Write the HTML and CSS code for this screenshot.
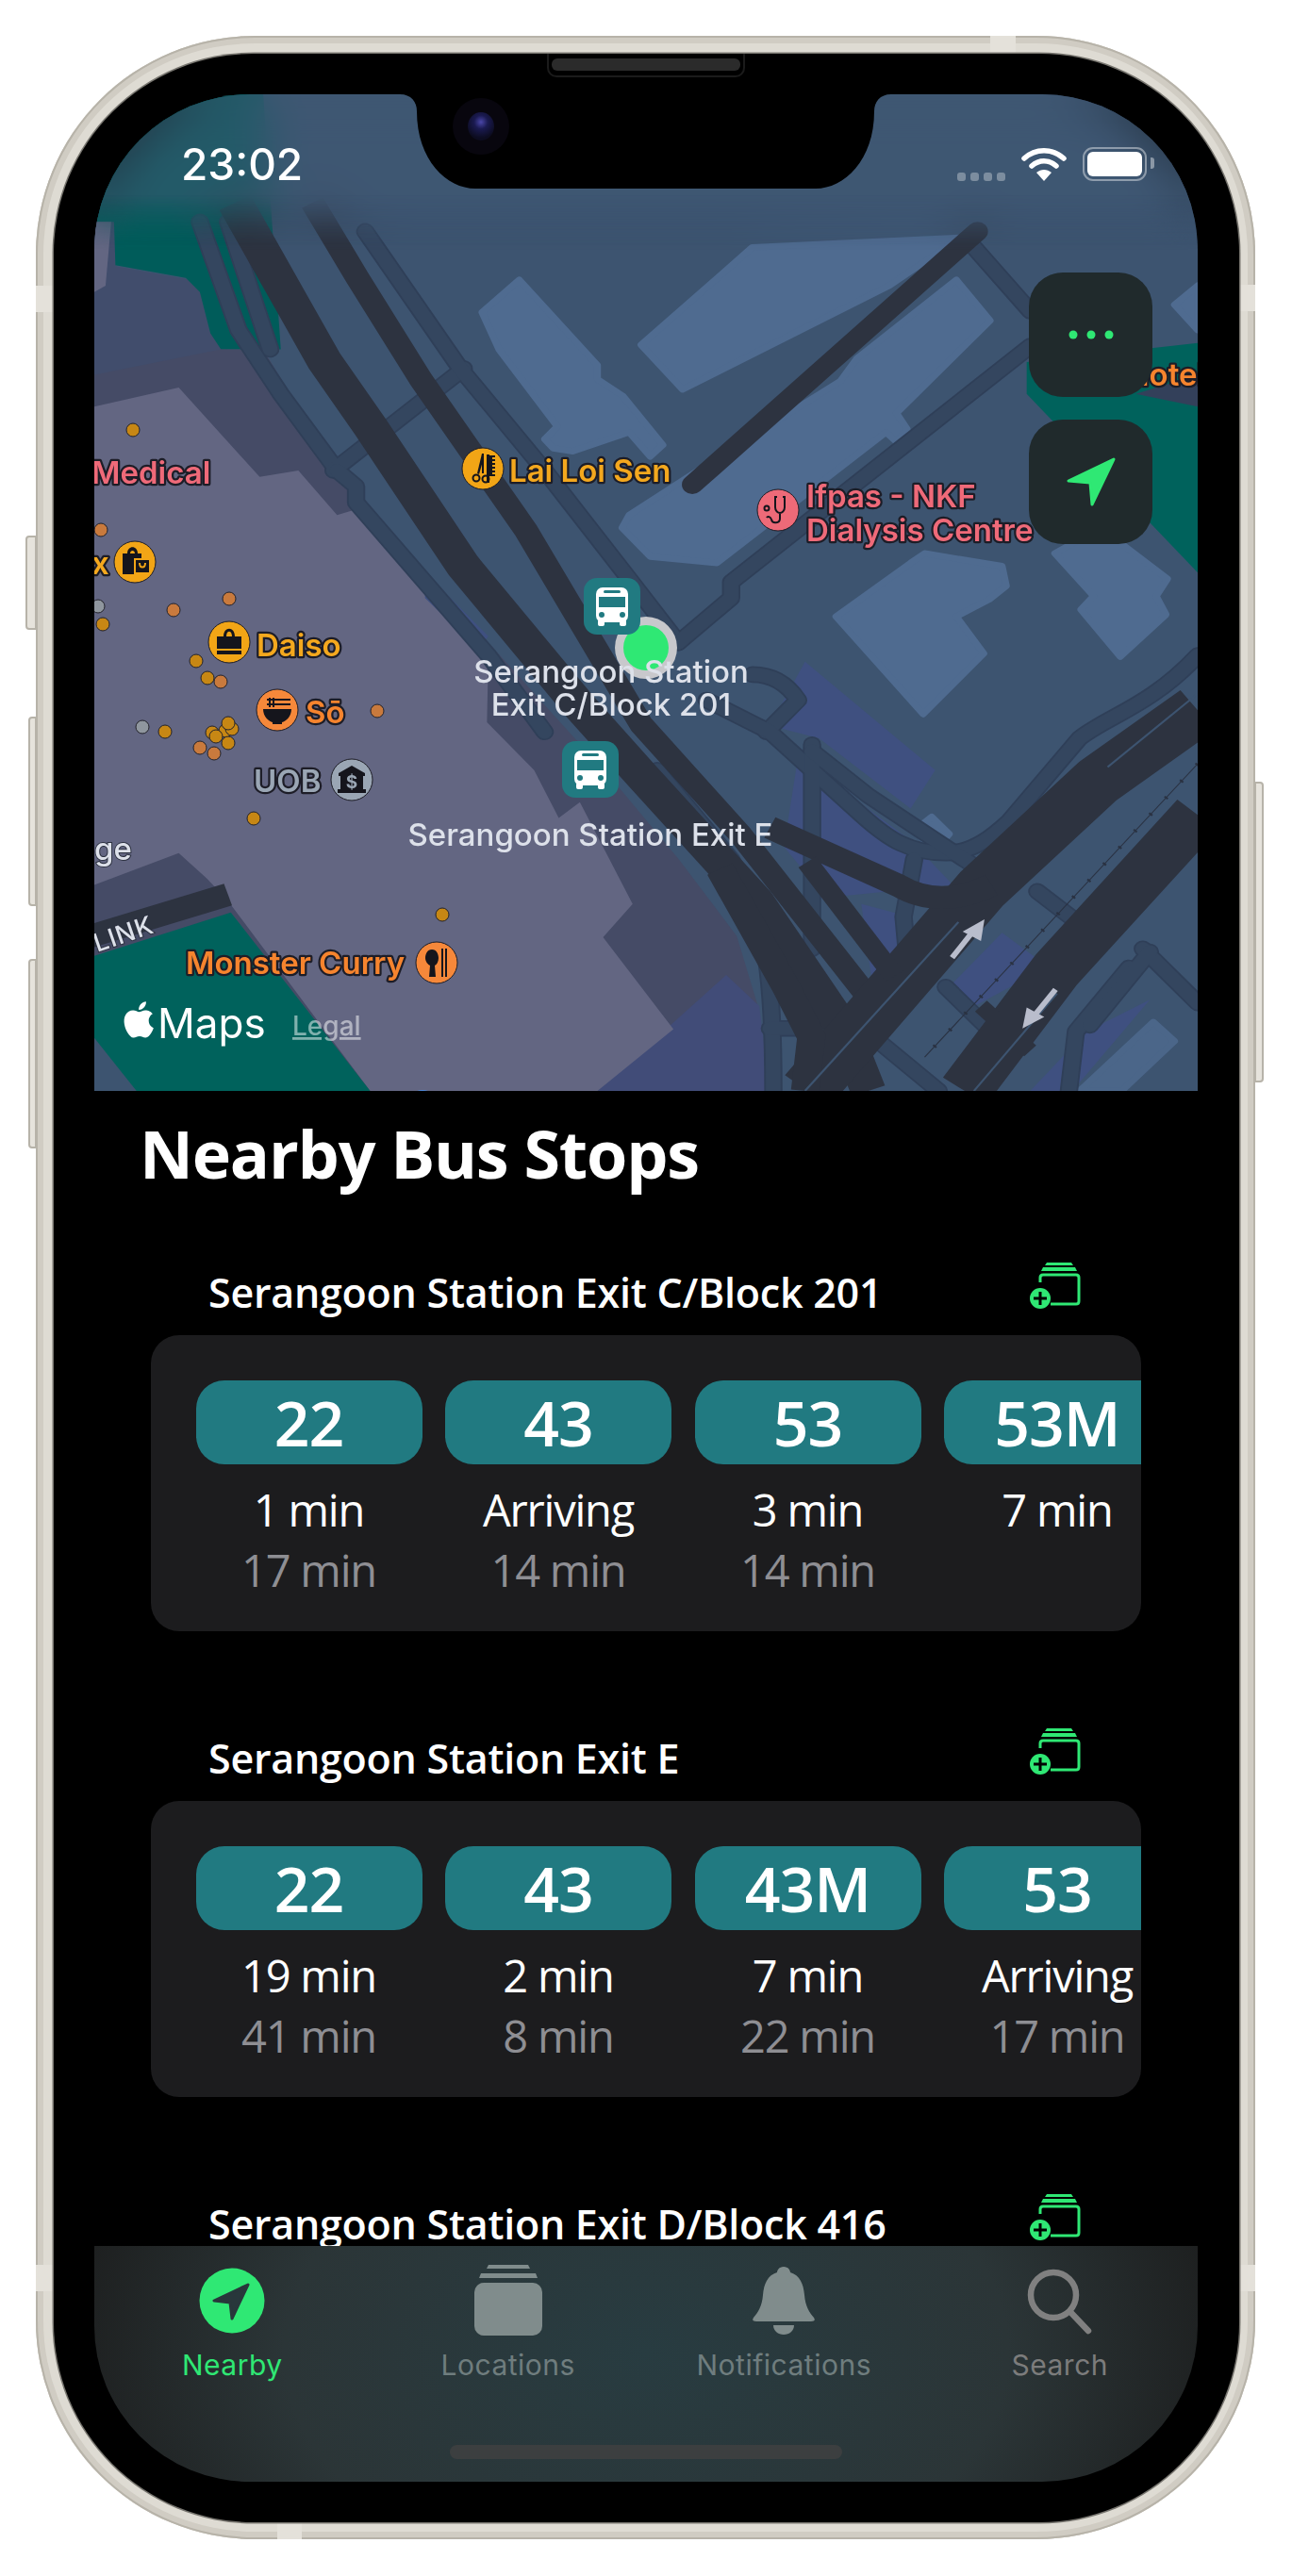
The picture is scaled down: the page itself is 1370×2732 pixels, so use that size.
FILE: index.html
```html
<!DOCTYPE html>
<html lang="en">
<head>
    <meta charset="UTF-8">
    <title>Nearby Bus Stops</title>
    <link rel="stylesheet" href="styles.css">
</head>
<body>

<div class="phone">
    <span class="side-btn mute"></span>
    <span class="side-btn vol-up"></span>
    <span class="side-btn vol-down"></span>
    <span class="side-btn power"></span>
    <span class="band band-top"></span>
    <span class="band band-bottom"></span>
    <span class="band band-left1"></span>
    <span class="band band-left2"></span>
    <span class="band band-right1"></span>
    <span class="band band-right2"></span>

    <div class="bezel">
        <div class="speaker"></div>

        <div class="screen">

            <section class="map">
                <!-- base map, drawn in a stretched grid -->
                <svg class="map-base" viewBox="0 0 1568 1563" preserveAspectRatio="none">
                    <rect width="1568" height="1563" fill="#3d5470"/>

                    <!-- park and zones -->
                    <path fill="#414d6c" d="M0 200H40L30 270 130 290 165 312 190 400 0 450Z"/>
                    <path fill="#005c5a" d="M0 0H240L265 400H180L165 375 150 310 130 288 30 268 28 200 0 200Z"/>
                    <path fill="#636682" d="M0 200H24L16 300 0 310Z"/>
                    <path fill="#454b66" d="M0 440 180 400H240L350 600 375 650 560 860 740 1080 830 1199 913 1320 942 1426 950 1563H0Z"/>
                    <path fill="#414c78" d="M715 1563 898 1381 945 1430 960 1563Z"/>
                    <path fill="#636682" d="M0 490 120 460 235 600 290 590 345 660 375 650 560 880 558 985 625 1060 660 1135 690 1110 765 1270 723 1322 823 1466 715 1563H392L190 1265 160 1230 120 1190 0 1240Z"/>
                    <path fill="#00625c" d="M0 1351 194 1283 392 1563H0Z"/>
                    <path fill="#3d5470" d="M0 1480 60 1563H0Z"/>
                    <path fill="#00625c" d="M1325 420 1568 390V750L1325 470Z"/>
                    <path fill="#33405a" d="M1480 470 1568 440V490Z"/>

                    <!-- indigo ground -->
                    <path fill="#3f5080" d="M1010 890 1195 1060 1160 1120 1030 1010 960 990Z"/>
                    <path fill="#3f5080" d="M1000 1040 1160 1170 1220 1240 1040 1260 980 1180Z"/>
                    <path fill="#3f5080" d="M1090 1270 1160 1290 1150 1380 1110 1430Z"/>
                    <path fill="#3f5080" d="M1290 1315 1355 1368 1249 1431 1220 1394Z"/>
                    <path fill="#3f5080" d="M1330 1563 1410 1470 1500 1420 1390 1563Z"/>
                    <path fill="#3f5080" d="M470 750 560 850 545 870 470 790Z"/>

                    <!-- buildings -->
                    <g fill="#4f6b90" stroke="#4f6b90" stroke-width="10" stroke-linejoin="round">
                        <path d="M551 342 604 291 715 425 715 447 751 473 808 550 790 568 760 530 680 560 652 555 640 541 658 521 575 400Z"/>
                        <path d="M777 393 935 240 1230 225 1130 300 836 463Z"/>
                        <path d="M1225 291 1273 355 1140 500 1155 525 1140 545 1125 530 885 735 790 725 750 680 760 660 900 560 1060 450 1084 414Z"/>
                        <path d="M1054 819 1160 735 1180 720 1290 740 1296 771 1272 792 1225 819 1264 877 1178 972Z"/>
                        <path d="M1402 808 1420 787 1365 720 1430 680 1525 760 1509 787 1523 816 1458 882Z"/>
                        <path d="M1535 330 1568 300V370Z"/>
                        <path d="M1165 1155 1190 1133 1215 1160 1195 1185Z"/>
                        <path d="M1400 1563 1505 1455 1535 1485 1460 1563Z" opacity=".8"/>
                    </g>

                    <!-- secondary roads -->
                    <defs>
                        <g id="secondary" fill="none" stroke-linejoin="round" stroke-linecap="round">
                            <path d="M150 200 205 370 265 470 345 590"/>
                            <path d="M190 200 250 400"/>
                            <path d="M340 590 525 430"/>
                            <path d="M385 215 520 430 640 590 760 760 830 860"/>
                            <path d="M345 590 372 615 372 640 560 880 640 1000"/>
                            <path d="M830 860 905 790V765L1330 395"/>
                            <path d="M1250 240 1330 340"/>
                            <path d="M935 910C965 910 985 925 1000 950L955 1000"/>
                            <path d="M870 950 960 1000 1090 1130C1130 1170 1160 1190 1210 1190 1250 1190 1280 1160 1300 1140L1400 1010C1440 975 1500 960 1568 880"/>
                            <path d="M1020 1020V1340"/>
                            <path d="M1165 1200 1150 1290 1155 1350"/>
                            <path d="M800 1060 905 1200C950 1290 965 1350 965 1563"/>
                            <path d="M1020 1030 1100 1100 1250 1210"/>
                            <path d="M960 1465H1060"/>
                            <path d="M1340 1250 1405 1305"/>
                            <path d="M1210 1400 1275 1470"/>
                            <path d="M1490 1340 1568 1425"/>
                            <path d="M1470 1370 1395 1470 1385 1563"/>
                            <path d="M1500 1345 1415 1460"/>
                            <path d="M1120 1490 1200 1563"/>
                        </g>
                    </defs>
                    <use href="#secondary" class="road-edge"/>
                    <use href="#secondary" class="road-fill"/>

                    <!-- main roads -->
                    <g fill="none" stroke="#2d3340" stroke-linejoin="round">
                        <path stroke-width="50" d="M200 170 284 334 327 418 392 521 524 739 690 960 777 1067 942 1267 1066 1468 1100 1563"/>
                        <path stroke-width="34" d="M310 170 374 288 464 447 614 685 777 988 919 1162 1107 1426"/>
                        <path stroke-width="30" stroke-linecap="round" d="M1255 215 850 612"/>
                        <path stroke-width="80" d="M1568 966 1426 1077 1261 1246 1013 1563"/>
                        <path stroke-width="75" d="M1568 1130 1367 1373 1237 1563"/>
                        <path stroke-width="36" d="M960 1150 1143 1241C1180 1265 1225 1267 1275 1240"/>
                        <path stroke-width="40" d="M889 1215 983 1400 1019 1478 1010 1563"/>
                        <path stroke-width="30" d="M1013 1204 1137 1383"/>
                        <path stroke-width="24" d="M1260 1430 1330 1500"/>
                        <path stroke-width="36" d="M-10 1322 190 1255"/>
                    </g>
                    <g fill="none" stroke="#3d5470" stroke-width="3">
                        <path d="M1440 1055 1568 940"/>
                        <path d="M1228 1298 1010 1563"/>
                        <path d="M1368 1410 1250 1563"/>
                    </g>

                    <!-- rail -->
                    <g fill="none" stroke="#2a3242">
                        <path stroke-width="1.5" d="M1568 1050 1180 1510"/>
                        <path stroke-width="6" stroke-dasharray="3 31" d="M1568 1050 1180 1510"/>
                    </g>

                    <!-- direction arrows -->
                    <g fill="none" stroke="#b9bdcc" stroke-width="8">
                        <path d="M1219 1354 1252 1308"/>
                        <path d="M1366 1404 1332 1450"/>
                    </g>
                    <path fill="#b9bdcc" d="M1265 1294 1234 1313 1260 1328Z"/>
                    <path fill="#b9bdcc" d="M1319 1465 1350 1447 1325 1432Z"/>
                </svg>

                <div class="status-blur"></div>

                <!-- dots, pins and names, in screen pixels -->
                <svg class="map-pins" viewBox="0 0 1170 1057">
                    <g class="dots dot-gold">
                        <circle cx="41" cy="356" r="7"/><circle cx="9" cy="562" r="7"/>
                        <circle cx="108" cy="601" r="7"/><circle cx="120" cy="619" r="7"/>
                        <circle cx="75" cy="676" r="7"/><circle cx="125" cy="677" r="7"/>
                        <circle cx="139" cy="675" r="7"/><circle cx="146" cy="673" r="7"/>
                        <circle cx="142" cy="688" r="7"/><circle cx="129" cy="681" r="7"/>
                        <circle cx="142" cy="667" r="7"/><circle cx="169" cy="768" r="7"/>
                        <circle cx="369" cy="870" r="7"/>
                    </g>
                    <g class="dots dot-orange">
                        <circle cx="7" cy="462" r="7"/><circle cx="84" cy="547" r="7"/>
                        <circle cx="143" cy="535" r="7"/><circle cx="134" cy="623" r="7"/>
                        <circle cx="300" cy="654" r="7"/><circle cx="112" cy="693" r="7"/>
                        <circle cx="127" cy="699" r="7"/>
                    </g>
                    <g class="dots dot-grey">
                        <circle cx="4" cy="543" r="7"/><circle cx="51" cy="671" r="7"/>
                    </g>
                    <circle cx="348" cy="1072" r="16" fill="#4a86d8"/>

                    <!-- Lai Loi Sen -->
                    <g transform="translate(412 397)">
                        <circle class="poi poi-amber" r="22"/>
                        <g class="poi-glyph">
                            <rect x="4" y="-15" width="3" height="30"/>
                            <path d="M7 -14h6v2h-3v2h3v2h-3v2h3v2h-3v2h3v2h-3v2h3v2h-3v2h3v2h-6z"/>
                            <path d="M-1 -16 1 -16 1 5 -1 5Z"/>
                            <path d="M-1 -16 -6 5 -4 6 0 -8Z"/>
                            <circle class="poi-ring" cx="-7" cy="10" r="3.5"/>
                            <circle class="poi-ring" cx="3" cy="11" r="3.5"/>
                        </g>
                    </g>
                    <text class="label label-amber" x="440" y="411">Lai Loi Sen</text>

                    <!-- Ifpas -->
                    <g transform="translate(725 441)">
                        <circle class="poi poi-pink" r="22"/>
                        <path class="poi-line" d="M-1 -14h-2v11c0 4 3 6 5 6s5 -2 5 -6v-11h-2M2 3v6c0 5 -8 6 -9 1 -1 -3 -4 -4 -5 -2"/>
                        <circle class="poi-ring" cx="-12" cy="-2" r="2.5"/>
                    </g>
                    <text class="label label-pink" x="755" y="438">Ifpas - NKF</text>
                    <text class="label label-pink" x="755" y="474">Dialysis Centre</text>
                    <text class="label label-pink" x="-3" y="413">Medical</text>

                    <!-- hotel, mostly behind the button -->
                    <text class="label label-orange" x="1094" y="309">Hotel</text>

                    <!-- shop on the edge -->
                    <text class="label label-amber" x="-3" y="509">x</text>
                    <g transform="translate(43 496)">
                        <circle class="poi poi-amber" r="22"/>
                        <g class="poi-glyph">
                            <path d="M-13 -9H-8C-8 -18 3 -18 3 -9H7V-4H-1V13H-13ZM-5 -9H0C0 -13 -5 -13 -5 -9Z"/>
                            <path d="M1 -2H15V11H1Z"/>
                        </g>
                        <path class="poi-cut" d="M5 1C5 7 11 7 11 1"/>
                    </g>

                    <!-- Daiso -->
                    <g transform="translate(143 581)">
                        <circle class="poi poi-amber" r="22"/>
                        <g class="poi-glyph">
                            <path d="M-13 -6H-6C-6 -17 6 -17 6 -6H13V7H-13ZM-3 -6H3C3 -13 -3 -13 -3 -6Z"/>
                            <rect x="-13" y="9" width="26" height="4"/>
                        </g>
                    </g>
                    <text class="label label-amber" x="172" y="596">Daiso</text>

                    <!-- So -->
                    <g transform="translate(194 653)">
                        <circle class="poi poi-orange" r="22"/>
                        <g class="poi-glyph">
                            <path d="M-15 -1H15C15 7 9 12 5 13V15H-5V13C-9 12 -15 7 -15 -1Z"/>
                            <path d="M-11 -12H14V-10H-11ZM-11 -7H14V-5H-11Z"/>
                            <path d="M-9 -13H-7V-3H-9ZM-5 -13H-3V-3H-5Z"/>
                        </g>
                    </g>
                    <text class="label label-orange" x="224" y="667">Sō</text>

                    <!-- UOB -->
                    <text class="label label-grey" x="169" y="740">UOB</text>
                    <g transform="translate(273 727)">
                        <circle class="poi poi-grey" r="22"/>
                        <g class="poi-glyph">
                            <path d="M0 -15 14 -7V-4H-14V-7Z"/>
                            <path d="M-12 -4H12V10H-12Z"/>
                            <rect x="-15" y="10" width="30" height="4"/>
                        </g>
                        <text class="poi-dollar" y="9" text-anchor="middle">$</text>
                    </g>

                    <!-- Monster Curry -->
                    <text class="label label-orange" x="97" y="933">Monster Curry</text>
                    <g transform="translate(363 921)">
                        <circle class="poi poi-orange" r="22"/>
                        <g class="poi-glyph">
                            <path d="M-5 -14C0 -14 2 -9 2 -5 2 -1 0 2 -2 3L-1 15H-8L-7 3C-9 2 -12 -1 -12 -5 -12 -9 -10 -14 -5 -14Z"/>
                            <rect x="5" y="-15" width="2" height="30"/>
                            <rect x="9" y="-15" width="2" height="30"/>
                        </g>
                    </g>

                    <text class="label-road" x="0" y="812">ge</text>
                    <text class="label-road label-link" transform="translate(3 910) rotate(-19)">LINK</text>

                    <!-- user position -->
                    <circle cx="585" cy="587" r="33" fill="#c8c8cc"/>
                    <circle cx="585" cy="587" r="24" fill="#2fe874"/>

                    <!-- bus stop names -->
                    <text class="label-stop" x="548" y="624" text-anchor="middle">Serangoon Station</text>
                    <text class="label-stop" x="548" y="659" text-anchor="middle">Exit C/Block 201</text>
                    <text class="label-stop" x="526" y="797" text-anchor="middle">Serangoon Station Exit E</text>

                    <!-- bus stop pins -->
                    <defs>
                        <g id="bus-pin">
                            <rect class="pin-bg" width="60" height="60" rx="14"/>
                            <rect class="pin-bus" x="13" y="10" width="34" height="37" rx="7"/>
                            <rect class="pin-bus" x="15" y="44" width="7" height="7" rx="2"/>
                            <rect class="pin-bus" x="38" y="44" width="7" height="7" rx="2"/>
                            <rect class="pin-bg" x="16" y="20" width="28" height="11"/>
                            <rect class="pin-bg" x="21" y="13" width="18" height="3" rx="1.5"/>
                            <circle class="pin-bg" cx="19" cy="39" r="3"/>
                            <circle class="pin-bg" cx="41" cy="39" r="3"/>
                        </g>
                    </defs>
                    <use href="#bus-pin" x="519" y="513"/>
                    <use href="#bus-pin" x="496" y="686"/>

                    <!-- attribution -->
                    <path class="apple" transform="translate(27 960) scale(1.8)" d="M17.05 12.54c-.03-2.7 2.2-4 2.3-4.06-1.25-1.84-3.2-2.09-3.9-2.12-1.66-.17-3.24.98-4.08.98-.84 0-2.14-.96-3.52-.93-1.81.03-3.48 1.05-4.41 2.67-1.88 3.27-.48 8.1 1.35 10.75.9 1.3 1.97 2.75 3.37 2.7 1.35-.05 1.86-.87 3.5-.87 1.63 0 2.09.87 3.52.85 1.45-.03 2.37-1.32 3.26-2.62 1.03-1.5 1.45-2.96 1.48-3.03-.03-.02-2.84-1.09-2.87-4.32zM14.37 4.6c.75-.9 1.25-2.16 1.11-3.41-1.07.04-2.37.71-3.14 1.61-.69.8-1.29 2.08-1.13 3.3 1.2.09 2.41-.61 3.16-1.5z"/>
                    <text class="maps-word" x="67" y="1001">Maps</text>
                    <text class="maps-legal" x="210" y="998">Legal</text>
                </svg>

                <div class="map-buttons">
                    <button class="map-btn">
                        <svg width="60" height="12" viewBox="0 0 60 12"><circle cx="11" cy="6" r="4.5"/><circle cx="30" cy="6" r="4.5"/><circle cx="49" cy="6" r="4.5"/></svg>
                    </button>
                    <button class="map-btn">
                        <svg width="56" height="56" viewBox="0 0 56 56"><path stroke="#2fe874" stroke-width="3" stroke-linejoin="round" d="M52 4 4 27 27 29 29 52Z"/></svg>
                    </button>
                </div>
            </section>

            <div class="statusbar">
                <span class="clock">23:02</span>
                <div class="status-icons">
                    <div class="signal"><i></i><i></i><i></i><i></i></div>
                    <svg class="wifi" width="48" height="36" viewBox="0 0 48 36">
                        <path d="M3 12C15 1 33 1 45 12M11 20C19 13 29 13 37 20" fill="none" stroke="#fff" stroke-width="5.5" stroke-linecap="round"/>
                        <path d="M24 36 16 27C21 23 27 23 32 27Z" fill="#fff"/>
                    </svg>
                    <div class="battery"><span></span></div>
                </div>
            </div>

            <div class="notch">
                <svg width="521" height="100" viewBox="0 0 521 100"><path fill="#000" d="M0 0C12 0 18 8 18 18 18 70 50 100 80 100H441C471 100 503 70 503 18 503 8 509 0 521 0Z"/></svg>
                <span class="camera"><span class="lens"></span></span>
            </div>

            <main class="list">
                <h1 class="list-title">Nearby Bus Stops</h1>

                <section class="stop">
                    <header class="stop-head">
                        <h2>Serangoon Station Exit C/Block 201</h2>
                        <svg class="add-icon" width="60" height="56" viewBox="0 0 60 56"><use href="#add-location"/></svg>
                    </header>
                    <div class="card">
                        <div class="arrival"><div class="pill">22</div><p class="next">1 min</p><p class="later">17 min</p></div>
                        <div class="arrival"><div class="pill">43</div><p class="next">Arriving</p><p class="later">14 min</p></div>
                        <div class="arrival"><div class="pill">53</div><p class="next">3 min</p><p class="later">14 min</p></div>
                        <div class="arrival"><div class="pill">53M</div><p class="next">7 min</p></div>
                    </div>
                </section>

                <section class="stop">
                    <header class="stop-head">
                        <h2>Serangoon Station Exit E</h2>
                        <svg class="add-icon" width="60" height="56" viewBox="0 0 60 56"><use href="#add-location"/></svg>
                    </header>
                    <div class="card">
                        <div class="arrival"><div class="pill">22</div><p class="next">19 min</p><p class="later">41 min</p></div>
                        <div class="arrival"><div class="pill">43</div><p class="next">2 min</p><p class="later">8 min</p></div>
                        <div class="arrival"><div class="pill">43M</div><p class="next">7 min</p><p class="later">22 min</p></div>
                        <div class="arrival"><div class="pill">53</div><p class="next">Arriving</p><p class="later">17 min</p></div>
                    </div>
                </section>

                <section class="stop">
                    <header class="stop-head">
                        <h2>Serangoon Station Exit D/Block 416</h2>
                        <svg class="add-icon" width="60" height="56" viewBox="0 0 60 56">
                            <g id="add-location">
                                <path fill="none" stroke="#2fe874" stroke-width="3" d="M13 24V19C13 17 14.500 16 16 16H51C53 16 54 17 54 19V44C54 46 53 47 51 47H24"/>
                                <path fill="#2fe874" d="M16 8H50L52 12H14ZM20 3H46L48 6H18Z"/>
                                <circle cx="13" cy="41" r="11" fill="#2fe874"/>
                                <path stroke="#000" stroke-width="3" d="M13 34V48M6 41H20"/>
                            </g>
                        </svg>
                    </header>
                </section>
            </main>

            <nav class="tabbar">
                <a class="tab active">
                    <svg width="70" height="70" viewBox="0 0 70 70">
                        <circle cx="35" cy="35" r="34.500" fill="#2fe874"/>
                        <path fill="#28373b" stroke="#28373b" stroke-width="3" stroke-linejoin="round" d="M52 18 16 35 33 37 35 54Z"/>
                    </svg>
                    <span>Nearby</span>
                </a>
                <a class="tab">
                    <svg width="74" height="76" viewBox="0 0 74 76" fill="#808c8c">
                        <path d="M16 0H58L60 4H14ZM8 9H66L68 14H6Z"/>
                        <rect x="1" y="19" width="72" height="56" rx="10"/>
                    </svg>
                    <span>Locations</span>
                </a>
                <a class="tab">
                    <svg width="66" height="72" viewBox="0 0 66 72" fill="#808c8c">
                        <path d="M33 0C38 0 40 4 40 6 50 9 54 18 55 30 56 42 60 48 65 54 67 57 65 58 62 58H4C1 58-1 57 1 54 6 48 10 42 11 30 12 18 16 9 26 6 26 4 28 0 33 0Z"/>
                        <path d="M22 62H44C44 68 39 72 33 72 27 72 22 68 22 62Z"/>
                    </svg>
                    <span>Notifications</span>
                </a>
                <a class="tab tab-search">
                    <svg width="70" height="70" viewBox="0 0 70 70" fill="none" stroke="#808080" stroke-width="6.500" stroke-linecap="round">
                        <circle cx="28" cy="29" r="24"/>
                        <path d="M46 47 65 67"/>
                    </svg>
                    <span>Search</span>
                </a>
                <div class="home-bar"></div>
            </nav>
        </div>
    </div>
</div>

</body>
</html>
```

FILE: styles.css
```css
body{
  margin: 0;
  background: white;
  font-family: 'Open Sans', 'Liberation Sans', sans-serif;
}

p, h1, h2{
  margin: 0;
}

/* device */
.phone{
  position: relative;
  box-sizing: border-box;
  width: 1293px;
  height: 2655px;
  margin: 38px 0 0 38px;
  padding: 19px 17px 19px 19px;
  border-radius: 232px;
  background: #dedbd3;
  box-shadow: inset 0 0 0 2px #b7b3a9, inset 0 0 0 8px #d0ccc3;
}

.side-btn{
  position: absolute;
  border: 2px solid #b7b3a9;
  background: #e6e3dc;
  box-sizing: border-box;
}

.mute{ left: -11px; top: 530px; width: 12px; height: 100px; border-radius: 4px 0 0 4px; }
.vol-up{ left: -8px; top: 722px; width: 9px; height: 201px; border-radius: 4px 0 0 4px; }
.vol-down{ left: -8px; top: 979px; width: 9px; height: 201px; border-radius: 4px 0 0 4px; }
.power{ right: -9px; top: 791px; width: 10px; height: 319px; border-radius: 0 4px 4px 0; }

.band{
  position: absolute;
  background: #e4e1da;
}

.band-top{ left: 1012px; top: 0; width: 27px; height: 19px; }
.band-bottom{ left: 256px; bottom: 0; width: 26px; height: 19px; }
.band-left1{ left: 0; top: 265px; width: 19px; height: 28px; }
.band-left2{ left: 0; top: 2364px; width: 19px; height: 28px; }
.band-right1{ right: 0; top: 264px; width: 18px; height: 28px; }
.band-right2{ right: 0; top: 2364px; width: 18px; height: 28px; }

.bezel{
  position: relative;
  box-sizing: border-box;
  height: 2618px;
  padding: 43px;
  border-radius: 212px;
  background: black;
  box-shadow: 0 0 0 1.500px #77756f;
}

.speaker{
  position: absolute;
  left: 523px;
  top: 0;
  width: 210px;
  height: 25px;
  box-sizing: border-box;
  border: 2px solid #1b1b1b;
  border-top: 0;
  border-radius: 0 0 10px 10px;
  background: black;
}

.speaker::after{
  content: "";
  position: absolute;
  left: 3px;
  right: 3px;
  top: 5px;
  height: 13px;
  border-radius: 6px;
  background: #2b2b2b;
}

.screen{
  position: relative;
  width: 1170px;
  height: 2532px;
  overflow: hidden;
  border-radius: 165px;
  background: black;
}

/* map */
.map{
  position: relative;
  height: 1057px;
  overflow: hidden;
}

.map-base, .map-pins{
  position: absolute;
  left: 0;
  top: 0;
  width: 1170px;
  height: 1057px;
}

.road-edge{
  stroke: #2f3f58;
  stroke-width: 26;
}

.road-fill{
  stroke: #34465f;
  stroke-width: 21;
}

.status-blur{
  position: absolute;
  left: 0;
  right: 0;
  top: 0;
  height: 165px;
  background: rgba(64,90,116,.55);
  backdrop-filter: blur(24px);
  -webkit-mask-image: linear-gradient(black 65%, transparent);
  mask-image: linear-gradient(black 65%, transparent);
}

.dots circle{
  stroke: #22222a;
  stroke-width: 1;
}

.dot-gold{ fill: #c78714; }
.dot-orange{ fill: #c97a3d; }
.dot-grey{ fill: #8f969e; }

.poi{
  stroke: #1d1d25;
  stroke-width: 1;
}

.poi-amber{ fill: #f2a516; }
.poi-orange{ fill: #f6883a; }
.poi-pink{ fill: #ee6a78; }
.poi-grey{ fill: #9aa6b4; }

.poi-glyph{ fill: #15151c; }

.poi-ring, .poi-line, .poi-cut{
  fill: none;
  stroke: #15151c;
  stroke-width: 2;
}

.poi-cut{ stroke: #f2a516; }

.poi-dollar{
  font: 700 19px 'Inter', sans-serif;
  fill: #9aa6b4;
}

.label{
  font-family: 'Inter', sans-serif;
  font-size: 33px;
  font-weight: 600;
  stroke: #1d1d27;
  stroke-width: 4.500px;
  stroke-linejoin: round;
  paint-order: stroke fill;
}

.label-amber{ fill: #f4a81e; }
.label-pink{ fill: #ef6a79; }
.label-orange{ fill: #f6842e; }
.label-grey{ fill: #9aa6b4; }

.label-stop, .label-road{
  font-family: 'Inter', sans-serif;
  font-size: 33px;
  font-weight: 500;
  fill: #dde1ea;
}

.label-road{
  stroke: #2c3140;
  stroke-width: 2px;
  paint-order: stroke fill;
}

.label-link{
  font-size: 27px;
  letter-spacing: 1px;
}

.pin-bg{ fill: #217a81; }
.pin-bus{ fill: white; }

.apple{ fill: white; }

.maps-word{
  font-family: 'Inter', sans-serif;
  font-size: 44px;
  fill: white;
}

.maps-legal{
  font-family: 'Inter', sans-serif;
  font-size: 28px;
  font-weight: 500;
  fill: #ffffff;
  fill-opacity: .5;
  text-decoration: underline;
}

.map-buttons{
  position: absolute;
  right: 48px;
  top: 189px;
  display: flex;
  flex-direction: column;
  gap: 24px;
}

.map-btn{
  display: flex;
  align-items: center;
  justify-content: center;
  width: 131px;
  height: 132px;
  padding: 0;
  border: 0;
  border-radius: 36px;
  background: #202a2c;
  fill: #2fe874;
}

/* status bar */
.statusbar{
  position: absolute;
  left: 0;
  right: 0;
  top: 48px;
  height: 52px;
  padding: 0 54px 0 92px;
  display: flex;
  justify-content: space-between;
  align-items: center;
  color: white;
}

.clock{
  font-family: 'Inter', sans-serif;
  font-size: 46px;
  font-weight: 500;
}

.status-icons{
  display: flex;
  align-items: flex-end;
  height: 36px;
}

.signal{
  display: flex;
  gap: 5px;
  margin-right: 17px;
}

.signal i{
  width: 9px;
  height: 9px;
  border-radius: 3px;
  background: rgba(255,255,255,.32);
}

.battery{
  position: relative;
  box-sizing: border-box;
  width: 68px;
  height: 36px;
  margin-left: 17px;
  padding: 3px;
  border: 2.500px solid rgba(255,255,255,.42);
  border-radius: 11px;
}

.battery span{
  display: block;
  height: 100%;
  border-radius: 6px;
  background: white;
}

.battery::after{
  content: "";
  position: absolute;
  right: -10px;
  top: 9px;
  width: 4px;
  height: 12px;
  border-radius: 0 3px 3px 0;
  background: rgba(255,255,255,.42);
}

.notch{
  position: absolute;
  left: 324px;
  top: 0;
  width: 521px;
  height: 100px;
}

.notch svg{
  display: block;
}

.camera{
  position: absolute;
  left: 56px;
  top: 4px;
  width: 60px;
  height: 60px;
  border-radius: 50%;
  background: #08060e;
}

.lens{
  position: absolute;
  left: 16px;
  top: 15px;
  width: 28px;
  height: 30px;
  border-radius: 50%;
  background: radial-gradient(circle at 50% 35%, #4a46a8 0, #1a1a50 30%, #0c0c20 70%);
}

/* bus stop list */
.list-title{
  padding: 20px 0 0 48px;
  font-size: 70px;
  font-weight: 700;
  letter-spacing: -1.200px;
  line-height: 92px;
  color: white;
}

.stop{
  margin: 0 60px;
  height: 494px;
}

.stop:first-of-type{
  margin-top: 67px;
}

.stop-head{
  display: flex;
  justify-content: space-between;
  align-items: flex-start;
  height: 80px;
  padding: 0 60px 0 61px;
}

.stop-head h2{
  padding-top: 3px;
  font-size: 43px;
  font-weight: 600;
  letter-spacing: -.25px;
  line-height: 64px;
  color: white;
}

.add-icon{
  overflow: visible;
}

.card{
  box-sizing: border-box;
  height: 314px;
  padding: 48px 0 0 47.500px;
  display: flex;
  gap: 24.500px;
  overflow: hidden;
  border-radius: 30px;
  background: #1c1c1e;
}

.arrival{
  flex: none;
  width: 240px;
  text-align: center;
}

.pill{
  height: 89px;
  margin-bottom: 16px;
  border-radius: 30px;
  background: #217a81;
  color: white;
  font-size: 66px;
  font-weight: 600;
  letter-spacing: -1px;
  line-height: 89px;
}

.next, .later{
  font-size: 47px;
  letter-spacing: -1.200px;
  line-height: 64px;
  color: white;
}

.later{
  color: #8e8e93;
}

/* tab bar */
.tabbar{
  position: absolute;
  left: 0;
  right: 0;
  bottom: 0;
  height: 250px;
  display: flex;
  background: radial-gradient(ellipse 640px 420px at 50% 45%, #283c41 0, #2b3537 60%, #1c1d1d 100%);
}

.tab{
  flex: 1;
  display: flex;
  flex-direction: column;
  align-items: center;
  padding-top: 20px;
  color: #6f7d7e;
  font-family: 'Inter', sans-serif;
  font-size: 30px;
}

.tab svg{
  height: 76px;
}

.tab span{
  margin-top: 12px;
  letter-spacing: .5px;
}

.tab.active{
  color: #2fe874;
}

.tab-search{
  color: #7c7c7c;
}

.home-bar{
  position: absolute;
  left: 377px;
  bottom: 24px;
  width: 416px;
  height: 15px;
  border-radius: 8px;
  background: #3c3f40;
}
```
